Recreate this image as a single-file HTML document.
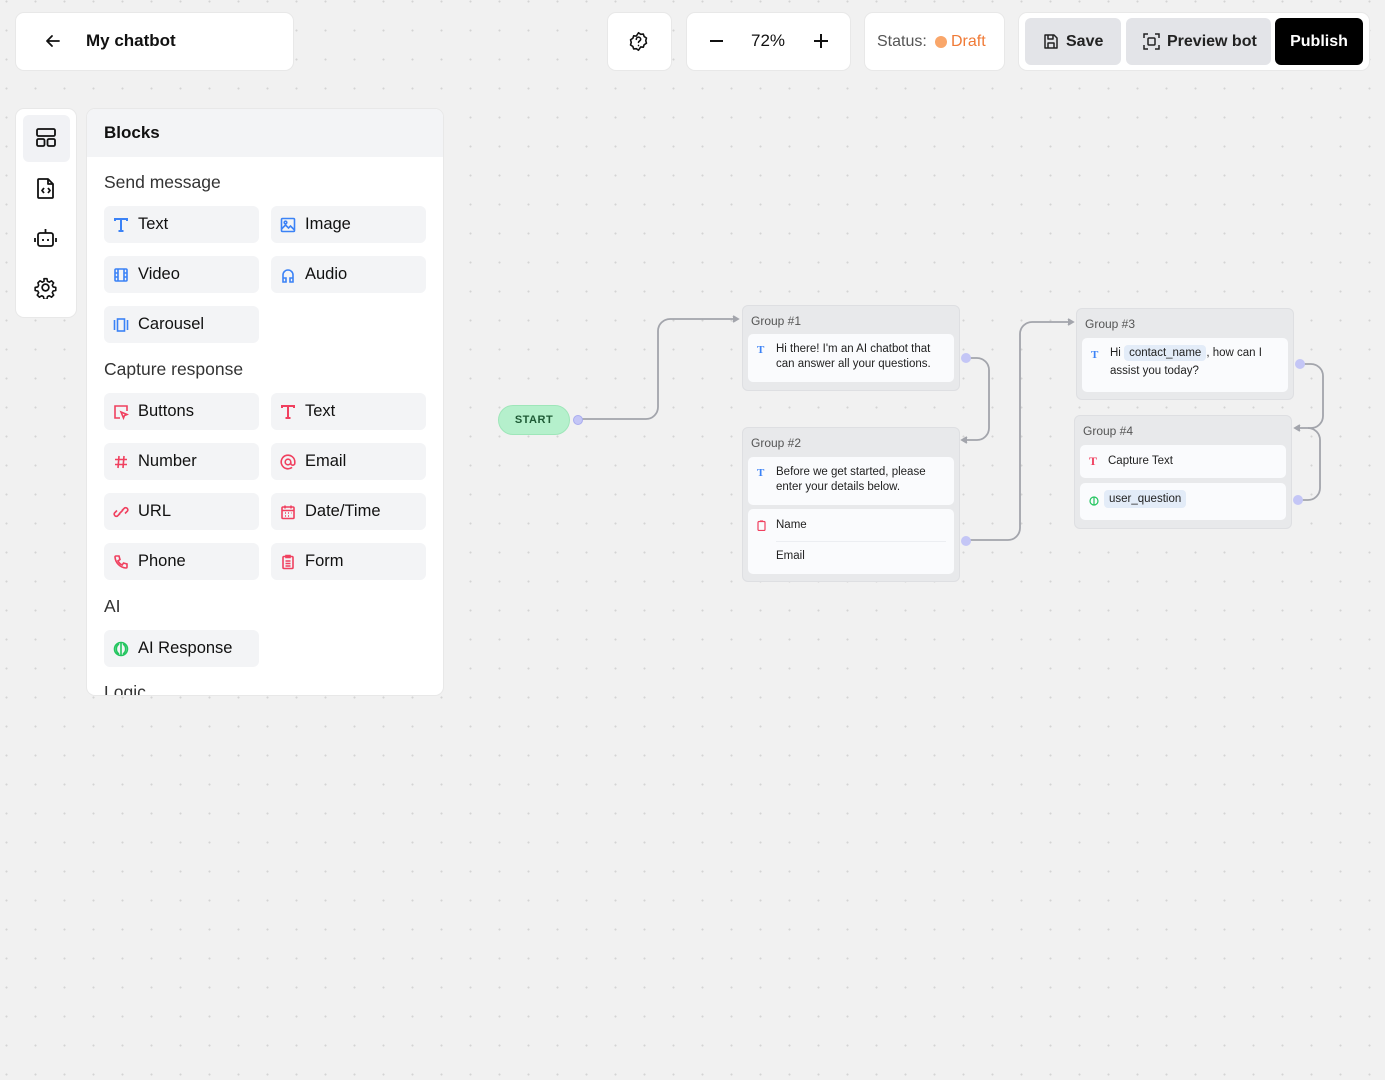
<!DOCTYPE html>
<html><head><meta charset="utf-8"><style>
*{box-sizing:border-box;margin:0;padding:0}
body{width:1385px;height:1080px;overflow:hidden;font-family:"Liberation Sans",sans-serif;color:#111;
background-color:#f1f1f1;background-image:radial-gradient(circle,#d4d4d4 0.9px,transparent 1.2px);background-size:29px 29px;background-position:-8px -13px;position:relative}
.abs{position:absolute}
.card{background:#fff;border-radius:8px;box-shadow:0 0 0 1px #e8e8e8}
.blk{position:absolute;width:155px;height:37px;background:#f3f4f6;border-radius:6px;display:flex;align-items:center;padding-left:9px;font-size:16.5px;color:#111}
.blk svg{width:16px;height:16px;margin-right:9px;flex:none}
.sec{position:absolute;left:104px;font-size:17.5px;color:#333}
.grp{position:absolute;background:#e8e9eb;border-radius:6px;border:1px solid #dedfe2}
.grp .t{position:absolute;left:8px;top:8px;font-size:12px;color:#555}
.ic{position:absolute;background:#fafbfd;border-radius:5px;font-size:11.5px;color:#222;line-height:15px}
.tag{background:#e3ecf8;border-radius:4px;padding:2px 5px}
</style></head><body>

<div class="card abs" style="left:16px;top:13px;width:277px;height:57px;display:flex;align-items:center">
<svg class="abs" style="left:29px;top:20px" width="16" height="16" viewBox="0 0 16 16" fill="none" stroke="#111" stroke-width="1.8" stroke-linecap="round" stroke-linejoin="round"><path d="M14 8H2M7 3L2 8l5 5"/></svg>
<div class="abs" style="left:70px;top:18px;font-size:17px;font-weight:bold">My chatbot</div></div>

<div class="card abs" style="left:608px;top:13px;width:63px;height:57px">
<svg class="abs" style="left:20px;top:18px" width="21" height="21" viewBox="0 0 24 24" fill="none" stroke="#111" stroke-width="1.8" stroke-linecap="round" stroke-linejoin="round"><path d="M12 2l2.5 1.8 3-.3 1 2.9 2.6 1.6-.8 3 .8 3-2.6 1.6-1 2.9-3-.3L12 22l-2.5-1.8-3 .3-1-2.9-2.6-1.6.8-3-.8-3 2.6-1.6 1-2.9 3 .3z"/><path d="M9.5 9.5a2.5 2.5 0 015 0c0 1.7-2.5 2-2.5 3.5M12 16.5v.1"/></svg></div>

<div class="card abs" style="left:687px;top:13px;width:163px;height:57px">
<div class="abs" style="left:23px;top:27px;width:13px;height:2px;background:#111"></div>
<div class="abs" style="left:64px;top:18px;font-size:17px">72%</div>
<div class="abs" style="left:127px;top:27px;width:14px;height:2px;background:#111"></div>
<div class="abs" style="left:133px;top:21px;width:2px;height:14px;background:#111"></div></div>

<div class="card abs" style="left:865px;top:13px;width:139px;height:57px">
<div class="abs" style="left:12px;top:20px;font-size:16px;color:#555">Status:</div>
<div class="abs" style="left:70px;top:23px;width:12px;height:12px;border-radius:50%;background:#f9a66a"></div>
<div class="abs" style="left:86px;top:20px;font-size:16px;color:#f07a36">Draft</div></div>

<div class="card abs" style="left:1019px;top:13px;width:350px;height:57px">
<div class="abs" style="left:6px;top:5px;width:96px;height:47px;background:#e3e4e8;border-radius:6px"></div>
<svg class="abs" style="left:24px;top:20px" width="16" height="17" viewBox="0 0 16 17" fill="none" stroke="#222" stroke-width="1.5" stroke-linejoin="round"><path d="M2 2h9l3 3v10H2z"/><path d="M5 2v4h5V2M5 15v-5h6v5"/></svg>
<div class="abs" style="left:47px;top:20px;font-size:16px;font-weight:bold;color:#222">Save</div>
<div class="abs" style="left:107px;top:5px;width:145px;height:47px;background:#e3e4e8;border-radius:6px"></div>
<svg class="abs" style="left:124px;top:20px" width="17" height="17" viewBox="0 0 17 17" fill="none" stroke="#222" stroke-width="1.5"><path d="M1 5V1h4M12 1h4v4M16 12v4h-4M5 16H1v-4"/><rect x="5" y="5" width="7" height="7" rx="1"/></svg>
<div class="abs" style="left:148px;top:20px;font-size:16px;font-weight:bold;color:#222">Preview bot</div>
<div class="abs" style="left:256px;top:5px;width:88px;height:47px;background:#000;border-radius:6px;color:#fff;font-size:16px;font-weight:bold;text-align:center;line-height:47px">Publish</div></div>

<div class="card abs" style="left:16px;top:109px;width:60px;height:208px">
<div class="abs" style="left:7px;top:6px;width:47px;height:47px;background:#f1f2f5;border-radius:6px"></div>
<svg class="abs" style="left:19px;top:18px" width="22" height="22" viewBox="0 0 22 22" fill="none" stroke="#111" stroke-width="1.8"><rect x="2" y="2" width="18" height="7" rx="1.5"/><rect x="2" y="12" width="7.5" height="7" rx="1.5"/><rect x="12.5" y="12" width="7.5" height="7" rx="1.5"/></svg>
<svg class="abs" style="left:20px;top:68px" width="20" height="23" viewBox="0 0 20 23" fill="none" stroke="#111" stroke-width="1.8" stroke-linejoin="round"><path d="M3 2h9l5 5v13a1 1 0 01-1 1H3a1 1 0 01-1-1V3a1 1 0 011-1z"/><path d="M12 2v5h5M8 11l-2 2.5L8 16M12 11l2 2.5L12 16"/></svg>
<svg class="abs" style="left:18px;top:118px" width="23" height="22" viewBox="0 0 23 22" fill="none" stroke="#111" stroke-width="1.8"><path d="M11.5 2v4"/><rect x="4" y="6" width="15" height="13" rx="2"/><path d="M1 11v4M22 11v4M9 12v2M14 12v2"/></svg>
<svg class="abs" style="left:18px;top:167px" width="23" height="23" viewBox="0 0 24 24" fill="none" stroke="#111" stroke-width="1.8" stroke-linejoin="round"><path d="M10.3 2h3.4l.6 3 2 1 2.6-1.6 2.4 2.4L19.7 9.4l1 2 3 .6v3.4l-3 .6-1 2 1.6 2.6-2.4 2.4-2.6-1.6-2 1-.6 3h-3.4l-.6-3-2-1-2.6 1.6-2.4-2.4 1.6-2.6-1-2-3-.6v-3.4l3-.6 1-2L3.4 6.8 5.8 4.4l2.6 1.6 2-1z" transform="scale(.92) translate(1,1)"/><circle cx="12" cy="12" r="3.5"/></svg></div>

<div class="card abs" style="left:87px;top:109px;width:356px;height:586px;overflow:hidden">
<div class="abs" style="left:0;top:0;width:356px;height:48px;background:#f3f4f6"></div>
<div class="abs" style="left:17px;top:14px;font-size:17px;font-weight:bold">Blocks</div></div>

<div class="sec" style="top:172px">Send message</div>
<div class="blk" style="left:104px;top:206px"><svg viewBox="0 0 16 16" fill="none" stroke="#3b82f6" stroke-width="2"><path d="M2 4V2h12v2M8 2v12M5.5 14h5"/></svg>Text</div>
<div class="blk" style="left:271px;top:206px"><svg viewBox="0 0 16 16" fill="none" stroke="#3b82f6" stroke-width="1.6"><rect x="1.5" y="1.5" width="13" height="13" rx="1"/><circle cx="5.5" cy="5.5" r="1.3"/><path d="M1.5 12l4-4 3 3 2-2 4 4"/></svg>Image</div>
<div class="blk" style="left:104px;top:256px"><svg viewBox="0 0 16 16" fill="none" stroke="#3b82f6" stroke-width="1.6"><rect x="2" y="2" width="12" height="12" rx="1"/><path d="M5 2v12M11 2v12M2 6h3M2 10h3M11 6h3M11 10h3"/></svg>Video</div>
<div class="blk" style="left:271px;top:256px"><svg viewBox="0 0 16 16" fill="none" stroke="#3b82f6" stroke-width="1.6"><path d="M3 15V8a5 5 0 0110 0v7M3 11h3v4H3zM10 11h3v4h-3z"/></svg>Audio</div>
<div class="blk" style="left:104px;top:306px"><svg viewBox="0 0 16 16" fill="none" stroke="#3b82f6" stroke-width="1.6"><rect x="4.5" y="2" width="7" height="12"/><path d="M1.5 3v10M14.5 3v10"/></svg>Carousel</div>

<div class="sec" style="top:359px">Capture response</div>
<div class="blk" style="left:104px;top:393px"><svg viewBox="0 0 16 16" fill="none" stroke="#f0405f" stroke-width="1.6"><path d="M7 14H2V2h12v5"/><path d="M8 8l6 2.5-2.5 1-1 2.5z"/></svg>Buttons</div>
<div class="blk" style="left:271px;top:393px"><svg viewBox="0 0 16 16" fill="none" stroke="#f0405f" stroke-width="2"><path d="M2 4V2h12v2M8 2v12M5.5 14h5"/></svg>Text</div>
<div class="blk" style="left:104px;top:443px"><svg viewBox="0 0 16 16" fill="none" stroke="#f0405f" stroke-width="1.6"><path d="M6 2L5 14M11 2l-1 12M2 5.5h12M2 10.5h12"/></svg>Number</div>
<div class="blk" style="left:271px;top:443px"><svg viewBox="0 0 16 16" fill="none" stroke="#f0405f" stroke-width="1.6"><circle cx="8" cy="8" r="2.8"/><path d="M10.8 8v1.2a2 2 0 004 0V8a6.8 6.8 0 10-2.7 5.4"/></svg>Email</div>
<div class="blk" style="left:104px;top:493px"><svg viewBox="0 0 16 16" fill="none" stroke="#f0405f" stroke-width="1.6"><path d="M7 9.5l-2.5 2.5a2.2 2.2 0 01-3-3L4 6.5M9 6.5l2.5-2.5a2.2 2.2 0 013 3L12 9.5M6 10l4-4"/></svg>URL</div>
<div class="blk" style="left:271px;top:493px"><svg viewBox="0 0 16 16" fill="none" stroke="#f0405f" stroke-width="1.6"><rect x="2" y="3" width="12" height="11.5" rx="1"/><path d="M2 6.5h12M5 1.5v3M11 1.5v3M5 9h1M8 9h1M11 9h.5M5 12h1M8 12h1"/></svg>Date/Time</div>
<div class="blk" style="left:104px;top:543px"><svg viewBox="0 0 16 16" fill="none" stroke="#f0405f" stroke-width="1.6"><path d="M3 2h3l1 3.5-2 1.3a8 8 0 004.2 4.2l1.3-2 3.5 1v3a1 1 0 01-1 1A12 12 0 012 3a1 1 0 011-1z"/></svg>Phone</div>
<div class="blk" style="left:271px;top:543px"><svg viewBox="0 0 16 16" fill="none" stroke="#f0405f" stroke-width="1.6"><rect x="3" y="2.5" width="10" height="12" rx="1"/><path d="M6 1.5h4v2H6zM5.5 7h5M5.5 9.5h5M5.5 12h5"/></svg>Form</div>

<div class="sec" style="top:596px">AI</div>
<div class="blk" style="left:104px;top:630px"><svg viewBox="0 0 16 16" fill="none" stroke="#22c55e" stroke-width="1.6"><circle cx="8" cy="8" r="6.5"/><path d="M8 1.5v13M6 3a6 6 0 000 10M10 3a6 6 0 010 10"/></svg>AI Response</div>
<div class="abs" style="left:87px;top:680px;width:356px;height:15px;overflow:hidden"><div class="abs" style="left:17px;top:2px;font-size:17.5px;color:#333">Logic</div></div>

<svg class="abs" style="left:0;top:0" width="1385" height="1080" fill="none" stroke="#a3a5ac" stroke-width="1.8">
<path d="M582 419H646a12 12 0 0012-12V331a12 12 0 0112-12h66"/><path d="M733 316l5 3-5 3" fill="#a3a5ac"/>
<path d="M970 358h7a12 12 0 0112 12v58a12 12 0 01-12 12h-14"/><path d="M967 437l-5 3 5 3" fill="#a3a5ac"/>
<path d="M970 540h38a12 12 0 0012-12V334a12 12 0 0112-12h38"/><path d="M1068 319l5 3-5 3" fill="#a3a5ac"/>
<path d="M1304 364h7a12 12 0 0112 12v40a12 12 0 01-12 12h-14"/><path d="M1300 425l-5 3 5 3" fill="#a3a5ac"/>
<path d="M1302 500h6a12 12 0 0012-12v-48a12 12 0 00-12-12"/>
</svg>

<div class="abs" style="left:498px;top:405px;width:72px;height:30px;border-radius:15px;background:#b5f0cc;border:1px solid #9ee6b9;color:#1e5a35;font-size:11px;font-weight:bold;text-align:center;line-height:28px;letter-spacing:.5px">START</div>
<div class="abs" style="left:573px;top:415px;width:10px;height:10px;border-radius:50%;background:#c4c6f6;border:1px solid #a9acef"></div>

<div class="grp" style="left:742px;top:305px;width:218px;height:86px"><div class="t">Group #1</div>
<div class="ic" style="left:5px;top:28px;width:206px;height:48px;padding:8px 0 0 28px">Hi there! I'm an AI chatbot that<br>can answer all your questions.</div>
<div class="abs" style="left:14px;top:38px;color:#3b82f6;font-weight:bold;font-size:11px;font-family:'Liberation Serif',serif">T</div></div>
<div class="abs" style="left:961px;top:353px;width:10px;height:10px;border-radius:50%;background:#c4c6f6"></div>

<div class="grp" style="left:742px;top:427px;width:218px;height:155px"><div class="t">Group #2</div>
<div class="ic" style="left:5px;top:29px;width:206px;height:48px;padding:8px 0 0 28px">Before we get started, please<br>enter your details below.</div>
<div class="abs" style="left:14px;top:39px;color:#3b82f6;font-weight:bold;font-size:11px;font-family:'Liberation Serif',serif">T</div>
<div class="ic" style="left:5px;top:81px;width:206px;height:65px;padding:9px 0 0 28px">Name<div style="height:1px;background:#eceef2;margin:8px 8px 7px 0"></div>Email</div>
<svg class="abs" style="left:14px;top:92px" width="9" height="11" viewBox="0 0 9 11" fill="none" stroke="#f0405f" stroke-width="1.2"><rect x="1" y="1.5" width="7" height="9" rx="1"/><path d="M3 1h3"/></svg></div>
<div class="abs" style="left:961px;top:536px;width:10px;height:10px;border-radius:50%;background:#c4c6f6"></div>

<div class="grp" style="left:1076px;top:308px;width:218px;height:92px"><div class="t">Group #3</div>
<div class="ic" style="left:5px;top:29px;width:206px;height:54px;padding:8px 0 0 28px">Hi <span class="tag">contact_name</span>, how can I<br><span style="line-height:20px">assist you today?</span></div>
<div class="abs" style="left:14px;top:40px;color:#3b82f6;font-weight:bold;font-size:11px;font-family:'Liberation Serif',serif">T</div></div>
<div class="abs" style="left:1295px;top:359px;width:10px;height:10px;border-radius:50%;background:#c4c6f6"></div>

<div class="grp" style="left:1074px;top:415px;width:218px;height:114px"><div class="t">Group #4</div>
<div class="ic" style="left:5px;top:29px;width:206px;height:33px;padding:9px 0 0 28px">Capture Text</div>
<div class="abs" style="left:14px;top:38px;color:#f0405f;font-weight:bold;font-size:12px;font-family:'Liberation Serif',serif">T</div>
<div class="ic" style="left:5px;top:67px;width:206px;height:37px;padding:9px 0 0 24px"><span class="tag" style="padding:3px 5px">user_question</span></div>
<svg class="abs" style="left:14px;top:80px" width="10" height="10" viewBox="0 0 10 10" fill="none" stroke="#22c55e" stroke-width="1.2"><circle cx="5" cy="5" r="4"/><path d="M5 1v8"/></svg></div>
<div class="abs" style="left:1293px;top:495px;width:10px;height:10px;border-radius:50%;background:#c4c6f6"></div>

</body></html>
